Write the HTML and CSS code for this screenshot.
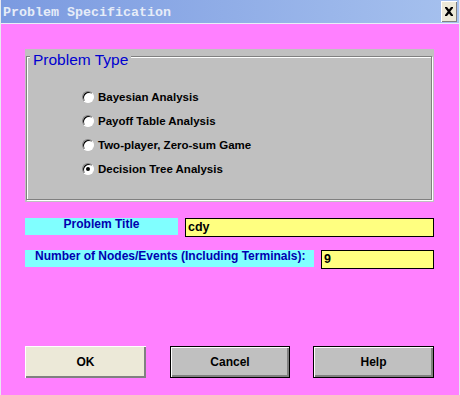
FILE: index.html
```html
<!DOCTYPE html>
<html lang="en">
  <head>
    <meta charset="UTF-8" />
    <meta name="viewport" content="width=device-width, initial-scale=1.0" />
    <title>Problem Specification</title>
    <link rel="stylesheet" href="styles.css">
  </head>
  <body>
    <div class="window">
      <div class="titlebar">
        <span class="title">Problem Specification</span>
        <button class="close" aria-label="Close">
          <svg width="10" height="9" viewBox="0 0 10 9">
            <path d="M1 0h2l2 2.5L7 0h2v1L6.3 4.5 9 8v1H7L5 6.5 3 9H1V8l2.7-3.5L1 1z" fill="#000"/>
          </svg>
        </button>
      </div>

      <div class="content">
        <div class="group">
          <div class="frame">
            <span class="caption">Problem Type</span>
            <div class="options">
              <label class="option"><span class="radio"></span>Bayesian Analysis</label>
              <label class="option"><span class="radio"></span>Payoff Table Analysis</label>
              <label class="option"><span class="radio"></span>Two-player, Zero-sum Game</label>
              <label class="option"><span class="radio checked"></span>Decision Tree Analysis</label>
            </div>
          </div>
        </div>

        <div class="field first">
          <div class="label title-label">Problem Title</div>
          <div class="input title-input">cdy</div>
        </div>
        <div class="field">
          <div class="label nodes-label">Number of Nodes/Events (Including Terminals):</div>
          <div class="input nodes-input">9</div>
        </div>

        <div class="buttons">
          <button class="btn ok">OK</button>
          <button class="btn outlined cancel">Cancel</button>
          <button class="btn outlined help">Help</button>
        </div>
      </div>
    </div>
  </body>
</html>
```

FILE: styles.css
```css
html, body {
  margin: 0;
  padding: 0;
}
body {
  font-family: "Liberation Sans", Arial, sans-serif;
  background: #ff80ff;
}
.window {
  width: 460px;
  height: 395px;
  box-sizing: border-box;
  background: #ff80ff;
  border-left: 1px solid #e8e8f0;
  border-right: 1px solid #e8e8f0;
  overflow: hidden;
}
.titlebar {
  height: 23px;
  display: flex;
  align-items: center;
  justify-content: space-between;
  background: linear-gradient(to right, #7b9ae0, #a6c1ee);
  border-bottom: 1px solid #e8eef8;
  padding: 0 2px 0 2px;
}
.title {
  font-family: "Liberation Mono", "Courier New", monospace;
  font-weight: bold;
  font-size: 13.33px;
  line-height: 23px;
  color: #e6ecf8;
  margin-top: 1px;
}
.close {
  width: 16px;
  height: 21px;
  padding: 0;
  margin: 0;
  border: none;
  background: #ece9d8;
  box-shadow: inset 1px 1px 0 #fff, inset -1px -1px 0 #808080;
  display: flex;
  align-items: center;
  justify-content: center;
}
.content {
  padding-left: 24px;
}
.group {
  width: 409px;
  height: 153px;
  box-sizing: border-box;
  margin-top: 25px;
  background: #c0c0c0;
  padding: 7px 1px 1px 1px;
}
.frame {
  position: relative;
  width: 406px;
  height: 144px;
  box-sizing: border-box;
  border: 1px solid #808080;
  box-shadow: inset 1px 1px 0 #fff, 1px 1px 0 #fff;
}
.caption {
  position: absolute;
  left: 3px;
  top: -5px;
  padding: 0 3px;
  background: #c0c0c0;
  color: #0000d0;
  font-size: 15.5px;
  line-height: 16px;
}
.options {
  padding: 28px 0 0 55px;
}
.option {
  display: flex;
  align-items: center;
  gap: 4px;
  height: 24px;
  font-weight: bold;
  font-size: 11.5px;
  color: #000;
}
.radio {
  width: 12px;
  height: 12px;
  box-sizing: border-box;
  border-radius: 50%;
  background: #fff;
  border: 1px solid;
  border-color: #808080 #fff #fff #808080;
  box-shadow: inset 1px 1px 0 #000;
  display: flex;
  align-items: center;
  justify-content: center;
}
.radio.checked::after {
  content: "";
  width: 4px;
  height: 4px;
  border-radius: 50%;
  background: #000;
}
.field {
  display: flex;
  align-items: flex-start;
  gap: 7px;
  margin-top: 13px;
}
.field.first {
  margin-top: 16px;
}
.label {
  height: 17px;
  background: #80ffff;
  color: #0000b0;
  font-weight: bold;
  font-size: 12px;
  line-height: 13px;
}
.title-label {
  width: 153px;
  text-align: center;
}
.nodes-label {
  width: 289px;
  box-sizing: border-box;
  padding-left: 10px;
}
.input {
  height: 19px;
  box-sizing: border-box;
  border: 1px solid #000;
  background: #ffff80;
  font-weight: bold;
  font-size: 12.5px;
  line-height: 17px;
  padding-left: 2px;
  color: #000;
}
.title-input {
  width: 249px;
}
.nodes-input {
  width: 113px;
}
.buttons {
  display: flex;
  margin-top: 77px;
}
.btn {
  height: 32px;
  width: 121px;
  padding: 0;
  border: none;
  font-family: "Liberation Sans", Arial, sans-serif;
  font-weight: bold;
  font-size: 12px;
  color: #000;
  background: #c0c0c0;
}
.btn.ok {
  background: #ece9d8;
  box-shadow: inset 1px 1px 0 #fff, inset -2px -2px 0 #808080;
}
.btn.outlined {
  border: 1px solid #000;
  box-shadow: inset 1px 1px 0 #fff, inset -2px -2px 0 #808080;
}
.cancel {
  width: 120px;
  margin-left: 24px;
}
.help {
  margin-left: 23px;
}
```
